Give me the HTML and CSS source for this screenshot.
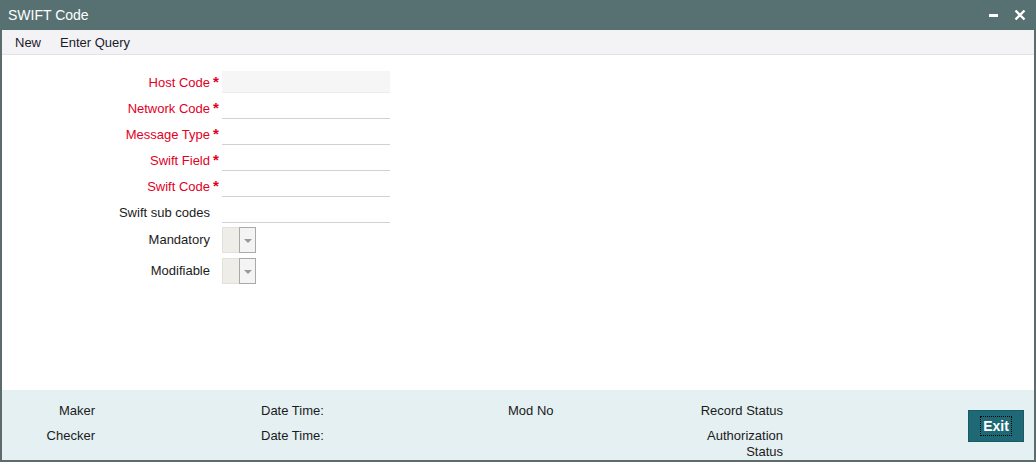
FILE: index.html
```html
<!DOCTYPE html>
<html>
<head>
    <title>SWIFT Code</title>
    <link rel="stylesheet" href="styles.css">
</head>
<body>
    <div class="window">
        <div class="title-bar">
            <span class="title">SWIFT Code</span>
            <div class="win-buttons">
                <svg class="win-icon" width="12" height="12" viewBox="0 0 12 12"><rect x="1" y="5" width="9" height="3" fill="#fff"/></svg>
                <svg class="win-icon" width="12" height="12" viewBox="0 0 12 12"><path d="M1.5 1.5 L10.5 10.5 M10.5 1.5 L1.5 10.5" stroke="#fff" stroke-width="2.4"/></svg>
            </div>
        </div>

        <div class="toolbar">
            <span class="tool">New</span>
            <span class="tool">Enter Query</span>
        </div>

        <div class="content">
            <div class="form-grid">
                <label class="req">Host Code</label><span class="star">*</span>
                <div class="field disabled"></div>

                <label class="req">Network Code</label><span class="star">*</span>
                <div class="field"></div>

                <label class="req">Message Type</label><span class="star">*</span>
                <div class="field"></div>

                <label class="req">Swift Field</label><span class="star">*</span>
                <div class="field"></div>

                <label class="req">Swift Code</label><span class="star">*</span>
                <div class="field"></div>

                <label>Swift sub codes</label><span class="star"></span>
                <div class="field"></div>
            </div>

            <div class="select-grid">
                <label>Mandatory</label>
                <div class="select-box"><span class="sel-value"></span><span class="sel-arrow"></span></div>

                <label>Modifiable</label>
                <div class="select-box"><span class="sel-value"></span><span class="sel-arrow"></span></div>
            </div>
        </div>

        <div class="footer">
            <div class="foot-col names">
                <div>Maker</div>
                <div>Checker</div>
            </div>
            <div class="foot-col dates">
                <div>Date Time:</div>
                <div>Date Time:</div>
            </div>
            <div class="foot-col modno">
                <div>Mod No</div>
            </div>
            <div class="foot-col status">
                <div>Record Status</div>
                <div class="auth">Authorization<br>Status</div>
            </div>
            <div class="foot-exit">
                <button class="exit-btn"><span>Exit</span></button>
            </div>
        </div>
    </div>
</body>
</html>
```

FILE: styles.css
```css
html, body {
    margin: 0;
    padding: 0;
}
body {
    font-family: "Liberation Sans", Arial, sans-serif;
    font-size: 13px;
    color: #1b1b1b;
    background-color: #ffffff;
}
.window {
    width: 1036px;
    height: 462px;
    box-sizing: border-box;
    border-left: 2px solid #5d6b6d;
    border-right: 2px solid #5d6b6d;
    border-bottom: 2px solid #5d6b6d;
    display: flex;
    flex-direction: column;
}
.title-bar {
    height: 30px;
    margin: 0 -2px;
    background-color: #577173;
    display: flex;
    align-items: center;
    justify-content: space-between;
    padding: 0 10px 0 8px;
}
.title {
    color: #ffffff;
    font-size: 14px;
}
.win-buttons {
    display: flex;
    gap: 14px;
    align-items: center;
}
.win-icon {
    display: block;
}
.toolbar {
    height: 24px;
    background-color: #f3f3f6;
    border-bottom: 1px solid #e3e3e6;
    display: flex;
    align-items: center;
    padding-left: 13px;
    gap: 19px;
}
.tool {
    color: #1b1b2b;
}
.content {
    flex: 1;
    padding-top: 13px;
}
.form-grid {
    display: grid;
    grid-template-columns: 208px 12px 168px;
    grid-auto-rows: 26px;
}
.form-grid label {
    text-align: right;
    line-height: 30px;
}
.req {
    color: #e2001f;
}
.star {
    color: #e2001f;
    font-size: 15px;
    font-weight: bold;
    line-height: 27px;
    padding-left: 3px;
}
.field {
    height: 25px;
    border-bottom: 1px solid #d2d2d2;
    box-sizing: border-box;
}
.field.disabled {
    background-color: #f6f6f6;
    border-bottom-color: #ececec;
    margin-top: 3px;
    height: 22px;
}
.select-grid {
    display: grid;
    grid-template-columns: 208px 34px;
    column-gap: 12px;
    grid-auto-rows: 26px;
    row-gap: 5px;
    margin-top: 3px;
}
.select-grid label {
    text-align: right;
    line-height: 25px;
}
.select-box {
    display: flex;
    height: 26px;
}
.sel-value {
    width: 16px;
    background-color: #efede8;
    border: 1px solid #e2e0db;
    border-right: none;
}
.sel-arrow {
    width: 16px;
    background-color: #f4f4f4;
    border: 1px solid #a9a9a9;
    position: relative;
}
.sel-arrow::after {
    content: "";
    position: absolute;
    left: 4px;
    top: 11px;
    border-left: 4px solid transparent;
    border-right: 4px solid transparent;
    border-top: 4px solid #9a9a9a;
}
.footer {
    height: 70px;
    background-color: #e4f0f2;
    display: flex;
    padding-top: 13px;
    box-sizing: border-box;
    line-height: 16px;
}
.foot-col div {
    margin-bottom: 9px;
}
.names {
    width: 93px;
    text-align: right;
}
.dates {
    margin-left: 166px;
    width: 247px;
}
.modno {
    width: 120px;
}
.status {
    width: 155px;
    text-align: right;
}
.foot-exit {
    margin-left: 185px;
    padding-top: 7px;
}
.exit-btn {
    width: 56px;
    height: 32px;
    background-color: #1e6975;
    border: 1px solid #195a64;
    color: #ffffff;
    font-family: "Liberation Sans", Arial, sans-serif;
    font-weight: bold;
    font-size: 14px;
    padding: 0;
    cursor: pointer;
}
.exit-btn span {
    outline: 1px dotted #000000;
    padding: 1px 2px;
}
```
